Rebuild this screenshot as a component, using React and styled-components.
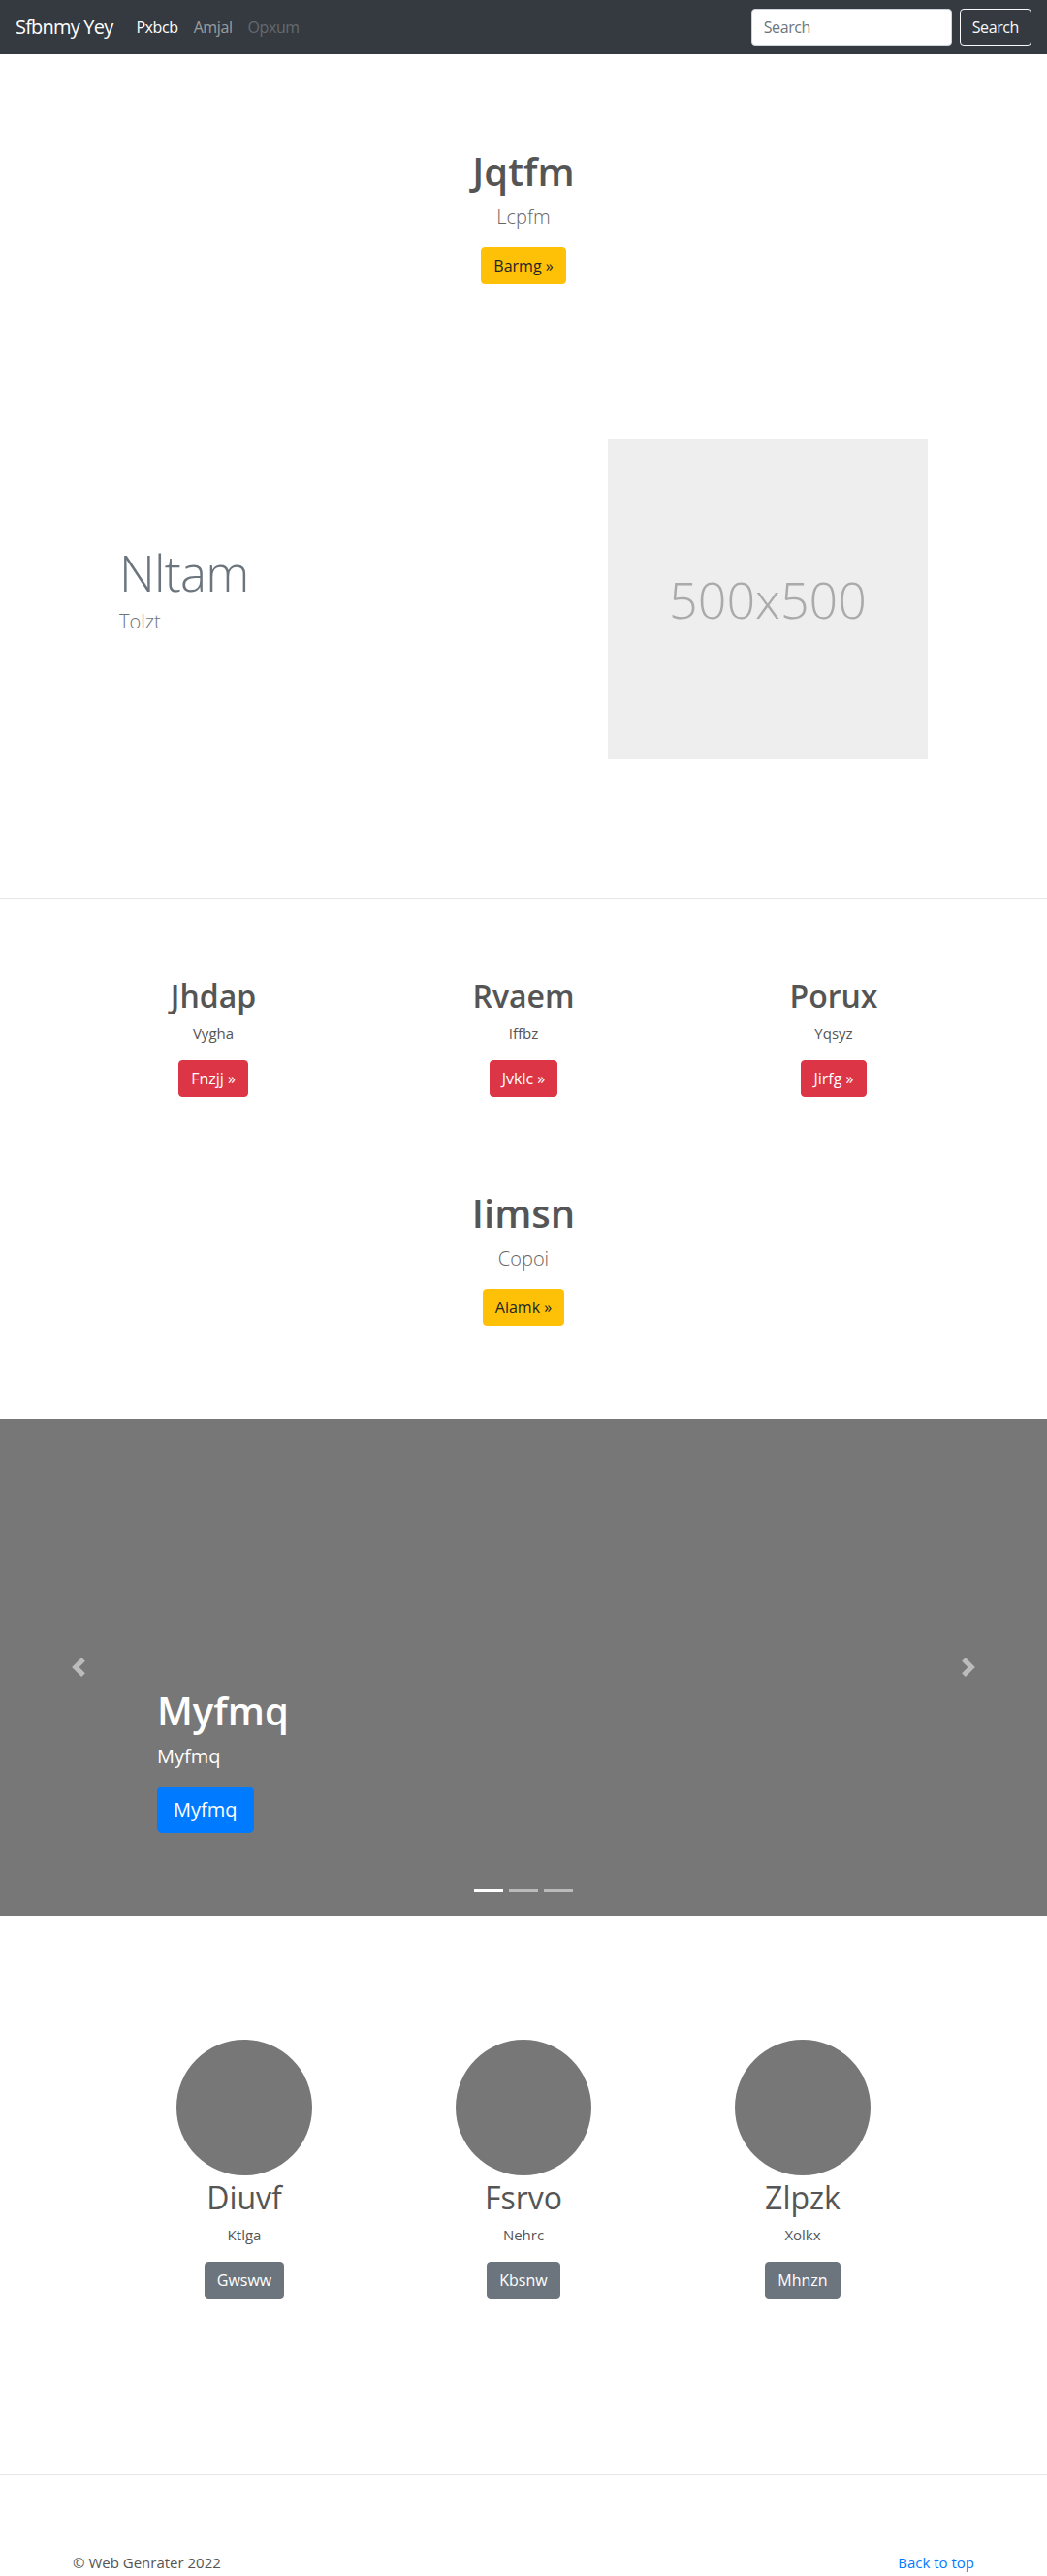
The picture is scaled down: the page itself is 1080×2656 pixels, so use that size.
import React from 'react';
import styled, {createGlobalStyle, css} from 'styled-components';

const GlobalStyle = createGlobalStyle`
  *, *::before, *::after {
    box-sizing: border-box;
  }
  body {
    margin: 0;
    font-family: "Open Sans", "Noto Sans", "Liberation Sans", sans-serif;
    font-size: 16px;
    line-height: 1.5;
    color: #555;
    background: #fff;
  }
  h1, h2, p {
    margin: 0;
  }
`;

// navbar

const Navbar = styled.nav`
  display: flex;
  align-items: center;
  height: 56px;
  padding: 8px 16px;
  background: #343a40;
  letter-spacing: -0.4px;
`;

const Brand = styled.a`
  font-size: 20px;
  line-height: 30px;
  margin-right: 16px;
  color: #fff;
  text-decoration: none;
  white-space: nowrap;
  letter-spacing: -0.8px;
`;

const NavList = styled.ul`
  display: flex;
  flex: 1;
  margin: 0;
  padding: 0;
  list-style: none;
`;

const linkColors = {
  active: '#fff',
  normal: 'rgba(255, 255, 255, 0.5)',
  disabled: 'rgba(255, 255, 255, 0.25)'
};

const NavLink = styled.a`
  display: block;
  padding: 8px;
  color: ${({$state}) => linkColors[$state || 'normal']};
  text-decoration: none;
`;

const SearchForm = styled.form`
  display: flex;
  gap: 8px;
`;

const SearchInput = styled.input`
  width: 207px;
  height: 38px;
  padding: 6px 12px;
  font: inherit;
  letter-spacing: inherit;
  color: #495057;
  background: #fff;
  border: 1px solid #ced4da;
  border-radius: 4px;

  &::placeholder {
    color: #6c757d;
  }
`;

const OutlineButton = styled.button`
  height: 38px;
  padding: 6px 12px;
  font: inherit;
  letter-spacing: inherit;
  color: #f8f9fa;
  background: transparent;
  border: 1px solid #f8f9fa;
  border-radius: 4px;
`;

// shared bits

const variants = {
  warning: css`
    background: #ffc107;
    border-color: #ffc107;
    color: #212529;
  `,
  danger: css`
    background: #dc3545;
    border-color: #dc3545;
    color: #fff;
  `,
  secondary: css`
    background: #6c757d;
    border-color: #6c757d;
    color: #fff;
  `,
  primary: css`
    background: #007bff;
    border-color: #007bff;
    color: #fff;
  `
};

const Button = styled.a`
  display: inline-block;
  padding: 6px 12px;
  font-size: 16px;
  line-height: 1.5;
  border: 1px solid transparent;
  border-radius: 4px;
  text-decoration: none;
  ${({$variant}) => variants[$variant]};

  ${({$large}) =>
    $large &&
    css`
      padding: 8px 16px;
      font-size: 20px;
      border-radius: 5px;
    `};
`;

const Title = styled.h1`
  font-size: 40px;
  font-weight: 600;
  line-height: 1.2;
  margin-bottom: 8px;
  color: #555;
`;

const Lead = styled.p`
  font-size: 20px;
  font-weight: 300;
  margin-bottom: 16px;
  color: #666;
`;

const Divider = styled.hr`
  margin: ${({$top}) => $top}px 0 0;
  border: 0;
  border-top: 1px solid rgba(0, 0, 0, 0.1);
`;

// intro blocks

const Intro = styled.section`
  padding-top: ${({$top}) => $top}px;
  text-align: center;
`;

// featurette

const Featurette = styled.section`
  display: grid;
  grid-template-columns: 7fr 5fr;
  align-items: center;
  width: 80%;
  margin: 160px auto 0;
`;

const FeatureText = styled.div`
  padding: 0 15px 20px;
`;

const FeatureHeading = styled.h2`
  font-size: 51px;
  font-weight: 300;
  line-height: 1.2;
  letter-spacing: -0.8px;
  color: #6c757d;
  margin-bottom: 4px;
`;

const FeatureLead = styled.p`
  font-size: 20px;
  font-weight: 300;
  color: #6c757d;
`;

const FeatureMedia = styled.div`
  padding: 0 15px;
`;

const Placeholder = styled.div`
  display: flex;
  align-items: center;
  justify-content: center;
  aspect-ratio: 1 / 1;
  width: 100%;
  background: #eee;
  color: #aaa;
  font-size: 52px;
  font-weight: 300;
`;

// three columns

const ColumnGrid = styled.section`
  display: grid;
  grid-template-columns: repeat(3, 1fr);
  width: ${({$wide}) => ($wide ? '960px' : '80%')};
  margin: ${({$top}) => $top}px auto 0;
  text-align: center;
`;

const Column = styled.div`
  padding: 0 15px;
`;

const ColumnHeading = styled.h2`
  font-size: 32px;
  font-weight: ${({$light}) => ($light ? 400 : 600)};
  line-height: 1.2;
  margin-bottom: 8px;
  color: #555;
`;

const ColumnText = styled.p`
  margin-bottom: 16px;
  font-size: 15px;
  color: #555;
`;

const Avatar = styled.div`
  width: 140px;
  height: 140px;
  margin: 0 auto 4px;
  border-radius: 50%;
  background: #777;
`;

// carousel

const Carousel = styled.section`
  position: relative;
  display: flex;
  align-items: flex-end;
  height: 512px;
  margin-top: 96px;
  padding: 0 0 85px 15%;
  background: #777;
  color: #fff;
`;

const Caption = styled.div`
  position: relative;
  z-index: 2;
`;

const CaptionTitle = styled.h1`
  font-size: 40px;
  font-weight: 600;
  line-height: 1.2;
  margin-bottom: 8px;
`;

const CaptionText = styled.p`
  font-size: 20px;
  margin-bottom: 16px;
`;

const Control = styled.a`
  position: absolute;
  top: 0;
  bottom: 0;
  ${({$side}) => $side}: 0;
  display: flex;
  align-items: center;
  justify-content: center;
  width: 15%;
  opacity: 0.5;
`;

const Indicators = styled.ol`
  position: absolute;
  left: 0;
  right: 0;
  bottom: 24px;
  display: flex;
  justify-content: center;
  gap: 6px;
  margin: 0;
  padding: 0;
  list-style: none;
`;

const Indicator = styled.li`
  width: 30px;
  height: 3px;
  background: #fff;
  opacity: ${({$active}) => ($active ? 1 : 0.5)};
`;

// footer

const Footer = styled.footer`
  display: flex;
  justify-content: space-between;
  width: 960px;
  margin: 0 auto;
  padding: 79px 15px 16px;
  font-size: 15px;
`;

const TopLink = styled.a`
  color: #007bff;
  text-decoration: none;
`;

const ChevronLeft = () => (
  <svg width="20" height="20" viewBox="0 0 8 8" fill="#fff">
    <path d="M5.25 0l-4 4 4 4 1.5-1.5L4.25 4l2.5-2.5L5.25 0z" />
  </svg>
);

const ChevronRight = () => (
  <svg width="20" height="20" viewBox="0 0 8 8" fill="#fff">
    <path d="M2.75 0l-1.5 1.5L3.75 4l-2.5 2.5L2.75 8l4-4-4-4z" />
  </svg>
);

const columns = [
  {title: 'Jhdap', text: 'Vygha', action: 'Fnzjj »'},
  {title: 'Rvaem', text: 'Iffbz', action: 'Jvklc »'},
  {title: 'Porux', text: 'Yqsyz', action: 'Jirfg »'}
];

const people = [
  {name: 'Diuvf', text: 'Ktlga', action: 'Gwsww'},
  {name: 'Fsrvo', text: 'Nehrc', action: 'Kbsnw'},
  {name: 'Zlpzk', text: 'Xolkx', action: 'Mhnzn'}
];

export default function App() {
  return (
    <>
      <GlobalStyle />
      <Navbar>
        <Brand href="#">Sfbnmy Yey</Brand>
        <NavList>
          <li>
            <NavLink href="#" $state="active">
              Pxbcb
            </NavLink>
          </li>
          <li>
            <NavLink href="#">Amjal</NavLink>
          </li>
          <li>
            <NavLink href="#" $state="disabled">
              Opxum
            </NavLink>
          </li>
        </NavList>
        <SearchForm onSubmit={e => e.preventDefault()}>
          <SearchInput type="text" placeholder="Search" />
          <OutlineButton type="submit">Search</OutlineButton>
        </SearchForm>
      </Navbar>

      <Intro $top={97}>
        <Title>Jqtfm</Title>
        <Lead>Lcpfm</Lead>
        <Button href="#" $variant="warning">
          Barmg »
        </Button>
      </Intro>

      <Featurette>
        <FeatureText>
          <FeatureHeading>Nltam</FeatureHeading>
          <FeatureLead>Tolzt</FeatureLead>
        </FeatureText>
        <FeatureMedia>
          <Placeholder>500x500</Placeholder>
        </FeatureMedia>
      </Featurette>

      <Divider $top={143} />

      <ColumnGrid $wide $top={81}>
        {columns.map(col => (
          <Column key={col.title}>
            <ColumnHeading>{col.title}</ColumnHeading>
            <ColumnText>{col.text}</ColumnText>
            <Button href="#" $variant="danger">
              {col.action}
            </Button>
          </Column>
        ))}
      </ColumnGrid>

      <Intro $top={96}>
        <Title>Iimsn</Title>
        <Lead>Copoi</Lead>
        <Button href="#" $variant="warning">
          Aiamk »
        </Button>
      </Intro>

      <Carousel>
        <Control href="#" $side="left">
          <ChevronLeft />
        </Control>
        <Caption>
          <CaptionTitle>Myfmq</CaptionTitle>
          <CaptionText>Myfmq</CaptionText>
          <Button href="#" $variant="primary" $large>
            Myfmq
          </Button>
        </Caption>
        <Control href="#" $side="right">
          <ChevronRight />
        </Control>
        <Indicators>
          <Indicator $active />
          <Indicator />
          <Indicator />
        </Indicators>
      </Carousel>

      <ColumnGrid $top={128}>
        {people.map(person => (
          <Column key={person.name}>
            <Avatar />
            <ColumnHeading $light>{person.name}</ColumnHeading>
            <ColumnText>{person.text}</ColumnText>
            <Button href="#" $variant="secondary">
              {person.action}
            </Button>
          </Column>
        ))}
      </ColumnGrid>

      <Divider $top={181} />

      <Footer>
        <p>© Web Genrater 2022</p>
        <TopLink href="#">Back to top</TopLink>
      </Footer>
    </>
  );
}
